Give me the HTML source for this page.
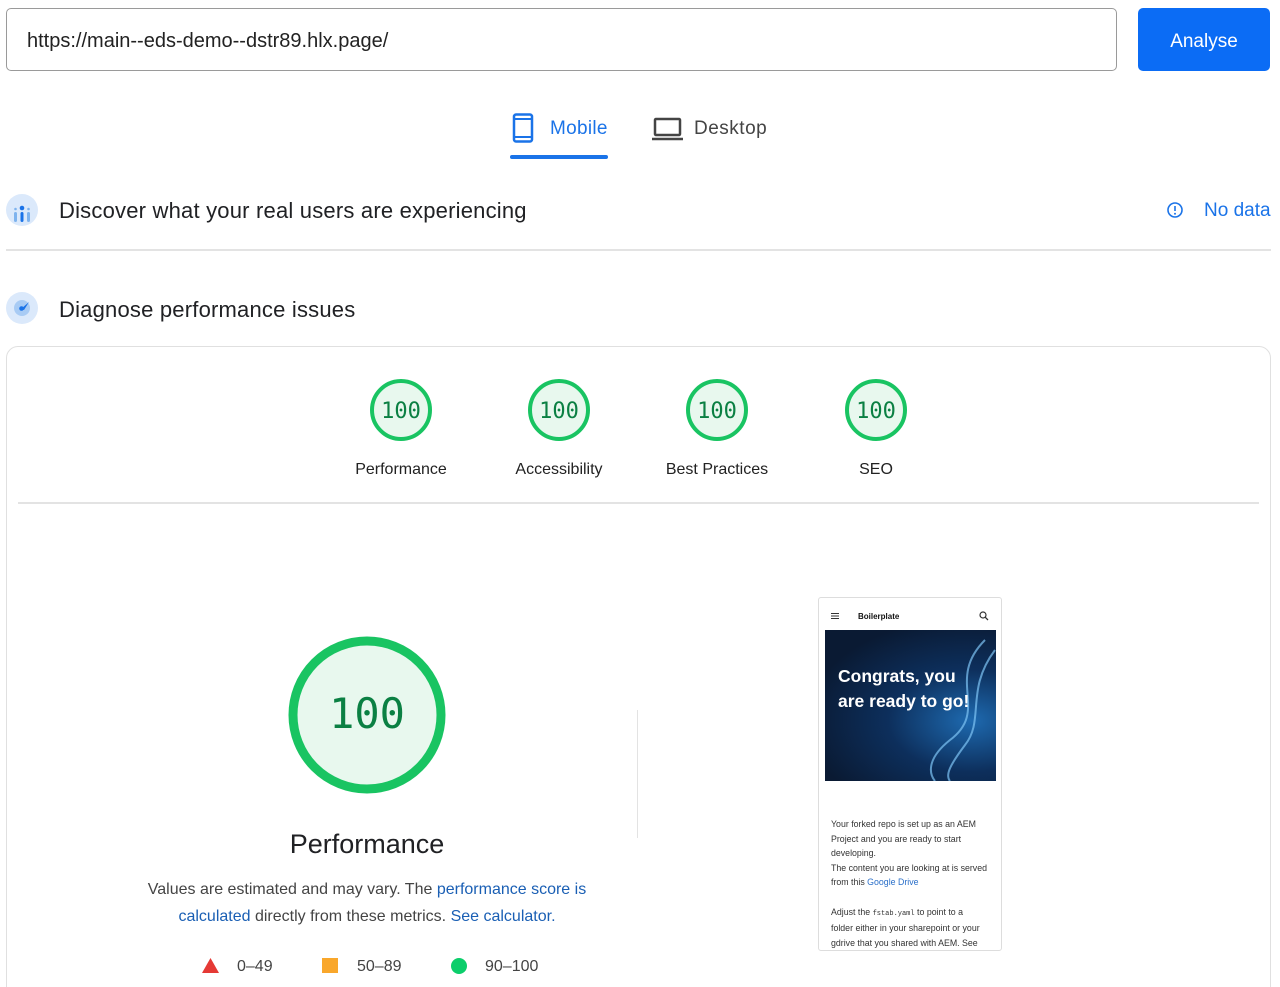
<!DOCTYPE html>
<html><head><meta charset="utf-8"><style>
*{margin:0;padding:0;box-sizing:border-box}
html,body{width:1280px;height:987px;overflow:hidden}
body{background:#fff;font-family:"Liberation Sans",sans-serif;position:relative;color:#202124}
.a{position:absolute}
.url{left:6px;top:8px;width:1111px;height:63px;border:1.5px solid #9a9a9a;border-radius:5px;font-size:20px;color:#222;padding:21px 0 0 20px}
.btn{left:1138px;top:8px;width:132px;height:63px;border-radius:5px;color:#fff;font-size:19px;text-align:center;line-height:67px;background:#0b6cf5}
.h{font-size:22px;color:#202124;letter-spacing:0.2px}
.lbl{font-size:16px;color:#222;text-align:center;width:140px}
.mono{font-family:"Liberation Mono",monospace}
</style></head><body>
<div class="a url">https://main--eds-demo--dstr89.hlx.page/</div>
<div class="a btn">Analyse</div>

<svg class="a" style="left:512px;top:113px" width="22" height="30" viewBox="0 0 22 30"><rect x="2" y="1.5" width="18" height="27" rx="2" fill="none" stroke="#1a73e8" stroke-width="2.5"/><line x1="2" y1="6" x2="20" y2="6" stroke="#1a73e8" stroke-width="2"/><line x1="2" y1="24" x2="20" y2="24" stroke="#1a73e8" stroke-width="2"/></svg>
<div class="a" style="left:550px;top:118px;font-size:19px;letter-spacing:0.3px;color:#1a73e8">Mobile</div>
<div class="a" style="left:510px;top:155px;width:98px;height:4px;background:#1a73e8;border-radius:2px"></div>
<svg class="a" style="left:652px;top:117px" width="31" height="24" viewBox="0 0 31 24"><rect x="3" y="2" width="25" height="16" rx="1" fill="none" stroke="#444" stroke-width="2.5"/><line x1="0" y1="22" x2="31" y2="22" stroke="#444" stroke-width="2.5"/></svg>
<div class="a" style="left:694px;top:118px;font-size:19px;letter-spacing:0.5px;color:#444">Desktop</div>

<div class="a" style="left:6px;top:194px;width:32px;height:32px;border-radius:50%;background:#dbe9fb"></div>
<svg class="a" style="left:10px;top:200px" width="24" height="24" viewBox="0 0 24 24"><circle cx="12" cy="8" r="2.3" fill="#1a73e8"/><rect x="4" y="12" width="3" height="10" rx="1.5" fill="#7eb3ee"/><rect x="10.5" y="12" width="3" height="10" rx="1.5" fill="#1a73e8"/><rect x="17" y="12" width="3" height="10" rx="1.5" fill="#7eb3ee"/><circle cx="5.5" cy="9" r="1.3" fill="#7eb3ee"/><circle cx="18.5" cy="9" r="1.3" fill="#7eb3ee"/></svg>
<div class="a h" style="left:59px;top:198px">Discover what your real users are experiencing</div>
<svg class="a" style="left:1166px;top:201px" width="18" height="18" viewBox="0 0 18 18"><circle cx="9" cy="9" r="7" fill="none" stroke="#1a73e8" stroke-width="1.6"/><line x1="9" y1="5" x2="9" y2="10" stroke="#1a73e8" stroke-width="1.6"/><circle cx="9" cy="12.7" r="1" fill="#1a73e8"/></svg>
<div class="a" style="left:1204px;top:200px;font-size:19px;color:#1a73e8">No data</div>
<div class="a" style="left:6px;top:249px;width:1265px;height:2px;background:#e3e3e3"></div>

<div class="a" style="left:6px;top:292px;width:32px;height:32px;border-radius:50%;background:#dbe9fb"></div>
<svg class="a" style="left:10px;top:296px" width="24" height="24" viewBox="0 0 24 24"><circle cx="12" cy="12" r="8" fill="#a8cbf4"/><path d="M11 13 L19 6 L14 14 Z" fill="#1a73e8"/><circle cx="11.5" cy="12.5" r="2.3" fill="#1a73e8"/></svg>
<div class="a h" style="left:59px;top:297px">Diagnose performance issues</div>

<div class="a" style="left:6px;top:346px;width:1265px;height:680px;border:1.5px solid #e0e0e0;border-radius:12px"></div>
<div class="a" style="left:18px;top:502px;width:1241px;height:1.5px;background:#e3e3e3"></div>

<svg class="a" style="left:369px;top:378px" width="64" height="64"><circle cx="32" cy="32" r="29" fill="#e8f8ee" stroke="#19c462" stroke-width="4"/><text x="32" y="40" text-anchor="middle" font-size="22" fill="#0b8043" font-family="DejaVu Sans Mono">100</text></svg>
<div class="a lbl" style="left:331px;top:461px">Performance</div>
<svg class="a" style="left:527px;top:378px" width="64" height="64"><circle cx="32" cy="32" r="29" fill="#e8f8ee" stroke="#19c462" stroke-width="4"/><text x="32" y="40" text-anchor="middle" font-size="22" fill="#0b8043" font-family="DejaVu Sans Mono">100</text></svg>
<div class="a lbl" style="left:489px;top:461px">Accessibility</div>
<svg class="a" style="left:685px;top:378px" width="64" height="64"><circle cx="32" cy="32" r="29" fill="#e8f8ee" stroke="#19c462" stroke-width="4"/><text x="32" y="40" text-anchor="middle" font-size="22" fill="#0b8043" font-family="DejaVu Sans Mono">100</text></svg>
<div class="a lbl" style="left:647px;top:461px">Best Practices</div>
<svg class="a" style="left:844px;top:378px" width="64" height="64"><circle cx="32" cy="32" r="29" fill="#e8f8ee" stroke="#19c462" stroke-width="4"/><text x="32" y="40" text-anchor="middle" font-size="22" fill="#0b8043" font-family="DejaVu Sans Mono">100</text></svg>
<div class="a lbl" style="left:806px;top:461px">SEO</div>

<svg class="a" style="left:287px;top:635px" width="160" height="160"><circle cx="80" cy="80" r="74" fill="#e8f8ee" stroke="#19c462" stroke-width="9"/><text x="80" y="93" text-anchor="middle" font-size="42" fill="#0b8043" font-family="DejaVu Sans Mono">100</text></svg>
<div class="a" style="left:217px;top:829px;width:300px;text-align:center;font-size:27px;color:#202124">Performance</div>
<div class="a" style="left:140px;top:876px;width:454px;text-align:center;font-size:16px;line-height:27px;color:#444">Values are estimated and may vary. The <span style="color:#1a5fb4">performance score is calculated</span> directly from these metrics. <span style="color:#1a5fb4">See calculator.</span></div>
<svg class="a" style="left:202px;top:958px" width="17" height="15"><path d="M8.5 0 L17 15 L0 15 Z" fill="#e53935"/></svg>
<div class="a" style="left:237px;top:958px;font-size:16px;color:#444">0–49</div>
<div class="a" style="left:322px;top:958px;width:16px;height:15px;background:#f9a72b"></div>
<div class="a" style="left:357px;top:958px;font-size:16px;color:#444">50–89</div>
<div class="a" style="left:451px;top:958px;width:16px;height:16px;border-radius:50%;background:#0cce6b"></div>
<div class="a" style="left:485px;top:958px;font-size:16px;color:#444">90–100</div>

<div class="a" style="left:637px;top:710px;width:1px;height:128px;background:#e3e3e3"></div>

<div class="a" style="left:818px;top:597px;width:184px;height:354px;border:1px solid #ddd;border-radius:3px;overflow:hidden;background:#fff">
 <div class="a" style="left:12px;top:15px;width:8px;height:1.3px;background:#333;box-shadow:0 2.5px 0 #333,0 5px 0 #333"></div>
 <div class="a" style="left:39px;top:14px;font-size:8px;font-weight:bold;color:#111">Boilerplate</div>
 <svg class="a" style="left:160px;top:13px" width="10" height="10"><circle cx="4" cy="4" r="3" fill="none" stroke="#333" stroke-width="1.2"/><line x1="6.3" y1="6.3" x2="9" y2="9" stroke="#333" stroke-width="1.3"/></svg>
 <div class="a" style="left:6px;top:32px;width:171px;height:151px;background:radial-gradient(ellipse at 85% 60%,#1e6ab0 0%,#0d2f5c 40%,#0a1a33 80%)">
  <svg class="a" style="left:0;top:0" width="171" height="151"><path d="M160 10 C120 50,165 80,125 110 C100 130,105 145,110 151" fill="none" stroke="#7fc4f5" stroke-width="2" opacity=".7"/><path d="M170 20 C140 60,160 90,140 115 C125 135,120 145,125 151" fill="none" stroke="#7fc4f5" stroke-width="2" opacity=".7"/></svg>
  <div class="a" style="left:13px;top:34px;font-size:17.5px;font-weight:bold;color:#fff;line-height:25px;white-space:nowrap">Congrats, you<br>are ready to go!</div>
 </div>
 <div class="a" style="left:12px;top:219px;width:156px;font-size:8.8px;line-height:14.6px;color:#333">Your forked repo is set up as an AEM Project and you are ready to start developing.<br>The content you are looking at is served from this <span style="color:#2a6fc9">Google Drive</span><br><br>Adjust the <span class="mono" style="font-size:7px">fstab.yaml</span> to point to a folder either in your sharepoint or your gdrive that you shared with AEM. See</div>
</div>
</body></html>
